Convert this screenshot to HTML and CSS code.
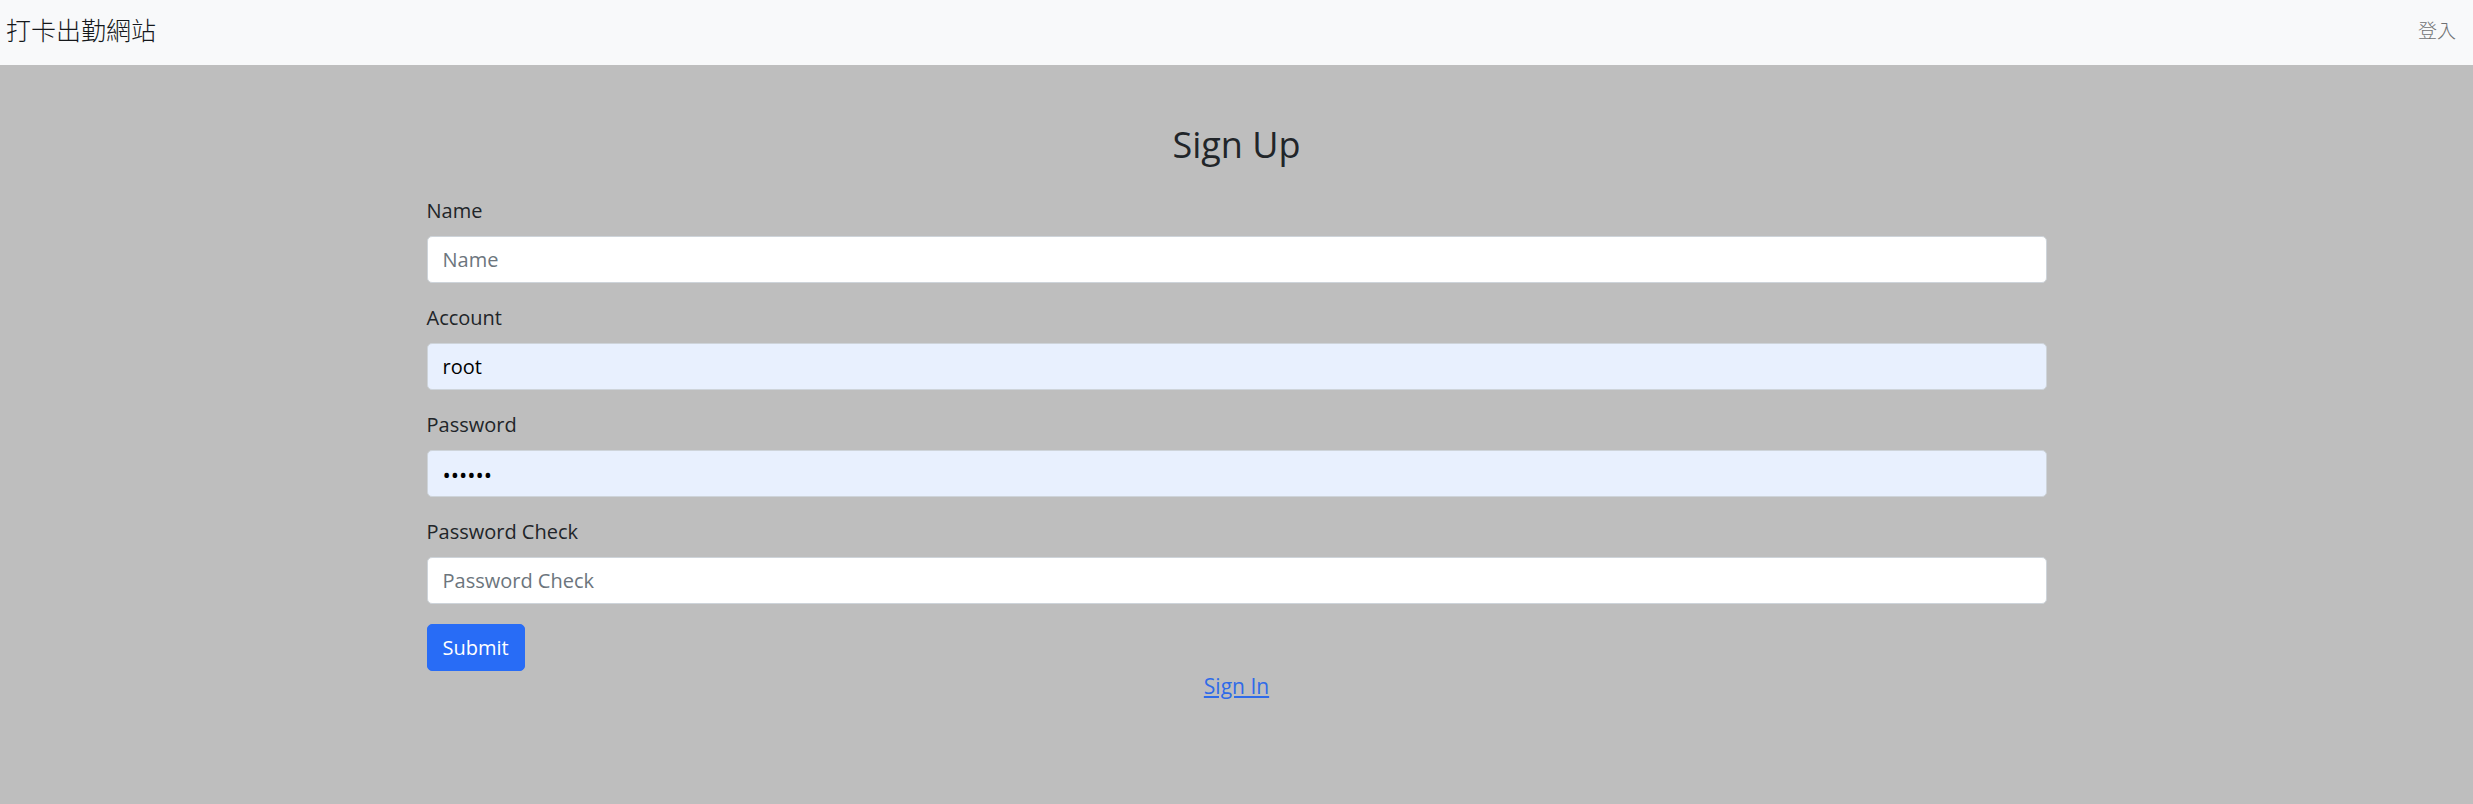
FILE: index.html
```html
<!DOCTYPE html>
<html lang="zh-Hant">
<head>
<meta charset="utf-8">
<title>Sign Up</title>
<link rel="stylesheet" href="styles.css">
</head>
<body>
<nav class="navbar">
  <a class="brand" href="#">打卡出勤網站</a>
  <a class="nav-link" href="#">登入</a>
</nav>
<main class="main">
  <div class="container">
    <h2 class="title">Sign Up</h2>
    <form class="form">
      <div class="group">
        <label class="label" for="name">Name</label>
        <input class="control" id="name" type="text" placeholder="Name">
      </div>
      <div class="group">
        <label class="label" for="account">Account</label>
        <input class="control autofill" id="account" type="text" value="root">
      </div>
      <div class="group">
        <label class="label" for="password">Password</label>
        <input class="control autofill pw" id="password" type="password" value="123456">
      </div>
      <div class="group">
        <label class="label" for="check">Password Check</label>
        <input class="control" id="check" type="password" placeholder="Password Check">
      </div>
      <button class="btn" type="button">Submit</button>
    </form>
    <div class="signin"><a class="link" href="#">Sign In</a></div>
  </div>
</main>
</body>
</html>
```

FILE: styles.css
```css
* { box-sizing: border-box; }
html, body { margin: 0; padding: 0; }
body {
  font-family: "Open Sans", "Noto Sans CJK TC", sans-serif;
  font-size: 20px;
  line-height: 1.5;
  color: #212529;
  background: #bebebe;
  min-height: 804px;
}
.navbar {
  height: 65px;
  background: #f8f9fa;
  display: flex;
  align-items: center;
  justify-content: space-between;
  padding: 0 17px 0 6px;
}
.brand {
  font-family: "Noto Sans CJK TC", sans-serif;
  font-size: 25px;
  font-weight: 300;
  color: #15181b;
  text-decoration: none;
  line-height: 1;
  margin-top: -6px;
}
.nav-link {
  font-family: "Noto Sans CJK TC", sans-serif;
  font-size: 19px;
  font-weight: 300;
  color: #6f7173;
  text-decoration: none;
  line-height: 1;
  margin-top: -6px;
}
.main { padding-top: 56px; }
.container {
  max-width: 1650px;
  margin: 0 auto;
  padding: 0 15px;
}
.title {
  margin: 0 0 27px;
  font-size: 36px;
  font-weight: 400;
  line-height: 48px;
  text-align: center;
}
.form { display: flex; flex-direction: column; align-items: stretch; }
.group { margin-bottom: 20px; display: flex; flex-direction: column; }
.label {
  font-size: 20px;
  line-height: 30px;
  margin-bottom: 10px;
}
.control {
  display: block;
  width: 100%;
  height: 47px;
  padding: 0 15px;
  font-family: "Open Sans", sans-serif;
  font-size: 20px;
  color: #212529;
  background: #fff;
  border: 1.25px solid #ced4da;
  border-radius: 5px;
  outline: none;
}
.control::placeholder { color: #6c757d; }
.autofill { background: #e8f0fe; color: #000; }
.pw { font-size: 22px; letter-spacing: 0; }
.btn {
  align-self: flex-start;
  height: 47px;
  padding: 0 15px;
  font-family: "Open Sans", sans-serif;
  font-size: 20px;
  color: #fff;
  background: #286cf6;
  border: 1.25px solid #286cf6;
  border-radius: 5px;
}
.signin { text-align: center; line-height: 30px; }
.link { color: #2f6be8; font-size: 21px; }
```
